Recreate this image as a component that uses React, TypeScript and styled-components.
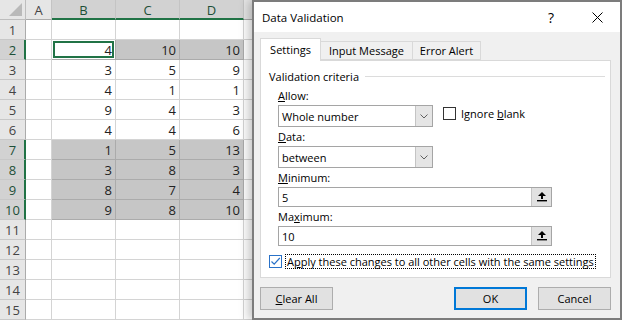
import styled, { createGlobalStyle } from "styled-components";

const GlobalStyle = createGlobalStyle`
  html, body {
    margin: 0;
    padding: 0;
    background: #fff;
    overflow: hidden;
  }
`;

const Screen = styled.div`
  position: relative;
  width: 622px;
  height: 320px;
  overflow: hidden;
  background: #fff;
`;

/* ---------- spreadsheet ---------- */

const Sheet = styled.div`
  display: grid;
  grid-template-columns: 26px 26px 64px 64px 64px 1fr;
  grid-auto-rows: 20px;
  font-family: "Open Sans", "Liberation Sans", sans-serif;
  font-size: 13px;
  color: #222;
`;

const Corner = styled.div`
  position: relative;
  box-sizing: border-box;
  background: #e6e6e6;
  border-right: 1px solid #bdbdbd;
  border-bottom: 1px solid #bdbdbd;

  &::after {
    content: "";
    position: absolute;
    right: 3px;
    bottom: 3px;
    width: 13px;
    height: 13px;
    background: #b9b9b9;
    clip-path: polygon(100% 0, 100% 100%, 0 100%);
  }
`;

const ColHead = styled.div<{ $selected?: boolean }>`
  box-sizing: border-box;
  display: flex;
  align-items: center;
  justify-content: center;
  background: ${(p) => (p.$selected ? "#d2d2d2" : "#e6e6e6")};
  color: ${(p) => (p.$selected ? "#1d4f37" : "#444")};
  border-right: 1px solid #c4c4c4;
  border-bottom: ${(p) => (p.$selected ? "2px solid #217346" : "1px solid #ababab")};
  padding-top: ${(p) => (p.$selected ? "1px" : "0")};
`;

const RowHead = styled.div<{ $selected?: boolean }>`
  box-sizing: border-box;
  display: flex;
  align-items: center;
  justify-content: center;
  background: ${(p) => (p.$selected ? "#d2d2d2" : "#e6e6e6")};
  color: ${(p) => (p.$selected ? "#1d4f37" : "#444")};
  border-bottom: 1px solid #c8c8c8;
  border-right: ${(p) => (p.$selected ? "2px solid #217346" : "1px solid #ababab")};
  padding-left: ${(p) => (p.$selected ? "1px" : "0")};
`;

const Cell = styled.div<{ $selected?: boolean; $active?: boolean }>`
  box-sizing: border-box;
  display: flex;
  align-items: center;
  justify-content: flex-end;
  padding-right: 3px;
  background: ${(p) => (p.$selected && !p.$active ? "#c6c6c6" : "#fff")};
  border-right: 1px solid ${(p) => (p.$selected ? "#ababab" : "#d4d4d4")};
  border-bottom: 1px solid ${(p) => (p.$selected ? "#ababab" : "#d4d4d4")};
  box-shadow: ${(p) =>
    p.$active ? "inset 0 0 0 1px #fff, inset 0 0 0 3px #217346" : "none"};
`;

/* ---------- dialog ---------- */

const Dialog = styled.div`
  position: absolute;
  left: 252px;
  top: 0;
  width: 370px;
  height: 320px;
  box-sizing: border-box;
  border: 2px solid #7c7c7c;
  background: #f0f0f0;
  box-shadow: -4px 0 9px rgba(0, 0, 0, 0.22);
  display: flex;
  flex-direction: column;
  font-family: "Open Sans", "Liberation Sans", sans-serif;
  font-size: 11px;
  color: #000;
`;

const TitleBar = styled.div`
  height: 30px;
  flex: none;
  display: flex;
  align-items: center;
  background: #fff;
  padding-left: 8px;
  font-size: 11.5px;
`;

const Title = styled.div`
  flex: 1;
`;

const TitleButton = styled.div`
  width: 46px;
  height: 30px;
  display: flex;
  align-items: center;
  justify-content: center;
  font-size: 14px;
`;

const Body = styled.div`
  flex: 1;
  display: flex;
  flex-direction: column;
  padding: 6px 9px 0 6px;
`;

const TabStrip = styled.div`
  display: flex;
  align-items: flex-end;
  height: 22px;
`;

const Tab = styled.div<{ $active?: boolean; $w: number }>`
  box-sizing: border-box;
  width: ${(p) => p.$w}px;
  height: ${(p) => (p.$active ? "23px" : "19px")};
  margin-bottom: ${(p) => (p.$active ? "-1px" : "0")};
  display: flex;
  align-items: center;
  justify-content: center;
  padding-bottom: ${(p) => (p.$active ? "2px" : "0")};
  background: ${(p) => (p.$active ? "#fff" : "#f0f0f0")};
  border: 1px solid #d9d9d9;
  border-bottom: ${(p) => (p.$active ? "none" : "1px solid #d9d9d9")};
  border-left: ${(p) => (p.$active ? "1px solid #d9d9d9" : "none")};
  position: relative;
  z-index: ${(p) => (p.$active ? 1 : 0)};
`;

const Panel = styled.div`
  box-sizing: border-box;
  height: 218px;
  background: #fff;
  border: 1px solid #d9d9d9;
  padding: 7px 5px 0 8px;
  display: flex;
  flex-direction: column;
`;

const GroupHeading = styled.div`
  display: flex;
  align-items: center;
  height: 16px;
  margin-bottom: 4px;

  &::after {
    content: "";
    flex: 1;
    height: 1px;
    background: #dcdcdc;
    margin-left: 6px;
  }
`;

const Fields = styled.div`
  display: flex;
  flex-direction: column;
  gap: 2px;
  padding-left: 9px;
`;

const FieldRow = styled.div`
  display: flex;
  align-items: flex-start;
`;

const Field = styled.div`
  display: flex;
  flex-direction: column;
  gap: 1px;
`;

const Label = styled.div`
  height: 16px;
  line-height: 16px;
`;

const Combo = styled.div<{ $h: number }>`
  box-sizing: border-box;
  width: 155px;
  height: ${(p) => p.$h}px;
  display: flex;
  border: 1px solid #a5a5a5;
  background: #fff;
`;

const ComboText = styled.div`
  flex: 1;
  display: flex;
  align-items: center;
  padding-left: 3px;
`;

const ComboArrow = styled.div`
  width: 16px;
  display: flex;
  align-items: center;
  justify-content: center;
  background: #e5e5e5;
  border-left: 1px solid #c4c4c4;
`;

const RefInput = styled.div`
  box-sizing: border-box;
  width: 274px;
  height: 20px;
  display: flex;
  border: 1px solid #a5a5a5;
  background: #fff;
`;

const RefButton = styled.div`
  width: 19px;
  display: flex;
  align-items: center;
  justify-content: center;
  background: #e1e1e1;
  border-left: 1px solid #c4c4c4;
`;

const CheckLabel = styled.div<{ $offset?: number }>`
  display: flex;
  align-items: center;
  margin-top: ${(p) => p.$offset ?? 0}px;
  margin-left: ${(p) => (p.$offset ? 10 : 0)}px;
`;

const Box = styled.div<{ $checked?: boolean }>`
  box-sizing: border-box;
  width: 13px;
  height: 13px;
  display: flex;
  align-items: center;
  justify-content: center;
  background: #fff;
  border: 1px solid ${(p) => (p.$checked ? "#2a72c8" : "#333")};
  margin-right: ${(p) => (p.$checked ? 3 : 5)}px;
`;

const FocusText = styled.span`
  border: 1px dotted #000;
  padding: 0 1px;
  line-height: 13px;
`;

const ApplyRow = styled.div`
  margin-top: 8px;
`;

const ButtonRow = styled.div`
  display: flex;
  margin-top: 9px;
  gap: 11px;
`;

const Button = styled.div<{ $default?: boolean }>`
  box-sizing: border-box;
  width: 73px;
  height: 23px;
  display: flex;
  align-items: center;
  justify-content: center;
  background: #e1e1e1;
  border: ${(p) => (p.$default ? "2px solid #0078d7" : "1px solid #adadad")};
`;

const Spacer = styled.div`
  flex: 1;
`;

function Chevron() {
  return (
    <svg width="8" height="5" viewBox="0 0 8 5">
      <polyline points="0.5,0.5 4,4 7.5,0.5" fill="none" stroke="#606060" strokeWidth="1" />
    </svg>
  );
}

function RefIcon() {
  return (
    <svg width="10" height="10" viewBox="0 0 10 10">
      <polygon points="5,0 9,4 1,4" fill="#000" />
      <rect x="4" y="4" width="2" height="3" fill="#000" />
      <rect x="0" y="8" width="10" height="1.4" fill="#000" />
    </svg>
  );
}

function CheckMark() {
  return (
    <svg width="11" height="11" viewBox="0 0 11 11">
      <polyline points="1.5,5.5 4.2,8.2 9.8,2" fill="none" stroke="#2a72c8" strokeWidth="1.2" />
    </svg>
  );
}

function CloseIcon() {
  return (
    <svg width="11" height="11" viewBox="0 0 11 11">
      <path d="M0.5 0.5 L10.5 10.5 M10.5 0.5 L0.5 10.5" stroke="#000" strokeWidth="1" />
    </svg>
  );
}

const data: (number[] | null)[] = [
  null,
  [4, 10, 10],
  [3, 5, 9],
  [4, 1, 1],
  [9, 4, 3],
  [4, 4, 6],
  [1, 5, 13],
  [3, 8, 3],
  [8, 7, 4],
  [9, 8, 10],
  null,
  null,
  null,
  null,
  null,
];

const selectedRows = [2, 7, 8, 9, 10];

function Spreadsheet() {
  return (
    <Sheet>
      <Corner />
      <ColHead>A</ColHead>
      <ColHead $selected>B</ColHead>
      <ColHead $selected>C</ColHead>
      <ColHead $selected>D</ColHead>
      <ColHead />
      {data.map((vals, i) => {
        const row = i + 1;
        const sel = selectedRows.includes(row);
        return [
          <RowHead key={`h${row}`} $selected={sel}>
            {row}
          </RowHead>,
          <Cell key={`a${row}`} />,
          ...[0, 1, 2].map((c) => (
            <Cell key={`c${row}-${c}`} $selected={sel} $active={row === 2 && c === 0}>
              {vals ? vals[c] : ""}
            </Cell>
          )),
          <Cell key={`e${row}`} />,
        ];
      })}
    </Sheet>
  );
}

export default function App() {
  return (
    <>
      <GlobalStyle />
      <Screen>
        <Spreadsheet />
        <Dialog>
          <TitleBar>
            <Title>Data Validation</Title>
            <TitleButton>?</TitleButton>
            <TitleButton>
              <CloseIcon />
            </TitleButton>
          </TitleBar>
          <Body>
            <TabStrip>
              <Tab $active $w={61}>Settings</Tab>
              <Tab $w={92}>Input Message</Tab>
              <Tab $w={68}>Error Alert</Tab>
            </TabStrip>
            <Panel>
              <GroupHeading>Validation criteria</GroupHeading>
              <Fields>
                <FieldRow>
                  <Field>
                    <Label>
                      <u>A</u>llow:
                    </Label>
                    <Combo $h={22}>
                      <ComboText>Whole number</ComboText>
                      <ComboArrow>
                        <Chevron />
                      </ComboArrow>
                    </Combo>
                  </Field>
                  <CheckLabel $offset={18}>
                    <Box />
                    <span>
                      Ignore <u>b</u>lank
                    </span>
                  </CheckLabel>
                </FieldRow>
                <Field>
                  <Label>
                    <u>D</u>ata:
                  </Label>
                  <Combo $h={22}>
                    <ComboText>between</ComboText>
                    <ComboArrow>
                      <Chevron />
                    </ComboArrow>
                  </Combo>
                </Field>
                <Field>
                  <Label>
                    <u>M</u>inimum:
                  </Label>
                  <RefInput>
                    <ComboText>5</ComboText>
                    <RefButton>
                      <RefIcon />
                    </RefButton>
                  </RefInput>
                </Field>
                <Field>
                  <Label>
                    Ma<u>x</u>imum:
                  </Label>
                  <RefInput>
                    <ComboText>10</ComboText>
                    <RefButton>
                      <RefIcon />
                    </RefButton>
                  </RefInput>
                </Field>
              </Fields>
              <ApplyRow>
                <CheckLabel>
                  <Box $checked>
                    <CheckMark />
                  </Box>
                  <FocusText>
                    A<u>p</u>ply these changes to all other cells with the same settings
                  </FocusText>
                </CheckLabel>
              </ApplyRow>
            </Panel>
            <ButtonRow>
              <Button>
                <span>
                  <u>C</u>lear All
                </span>
              </Button>
              <Spacer />
              <Button $default>OK</Button>
              <Button>Cancel</Button>
            </ButtonRow>
          </Body>
        </Dialog>
      </Screen>
    </>
  );
}
